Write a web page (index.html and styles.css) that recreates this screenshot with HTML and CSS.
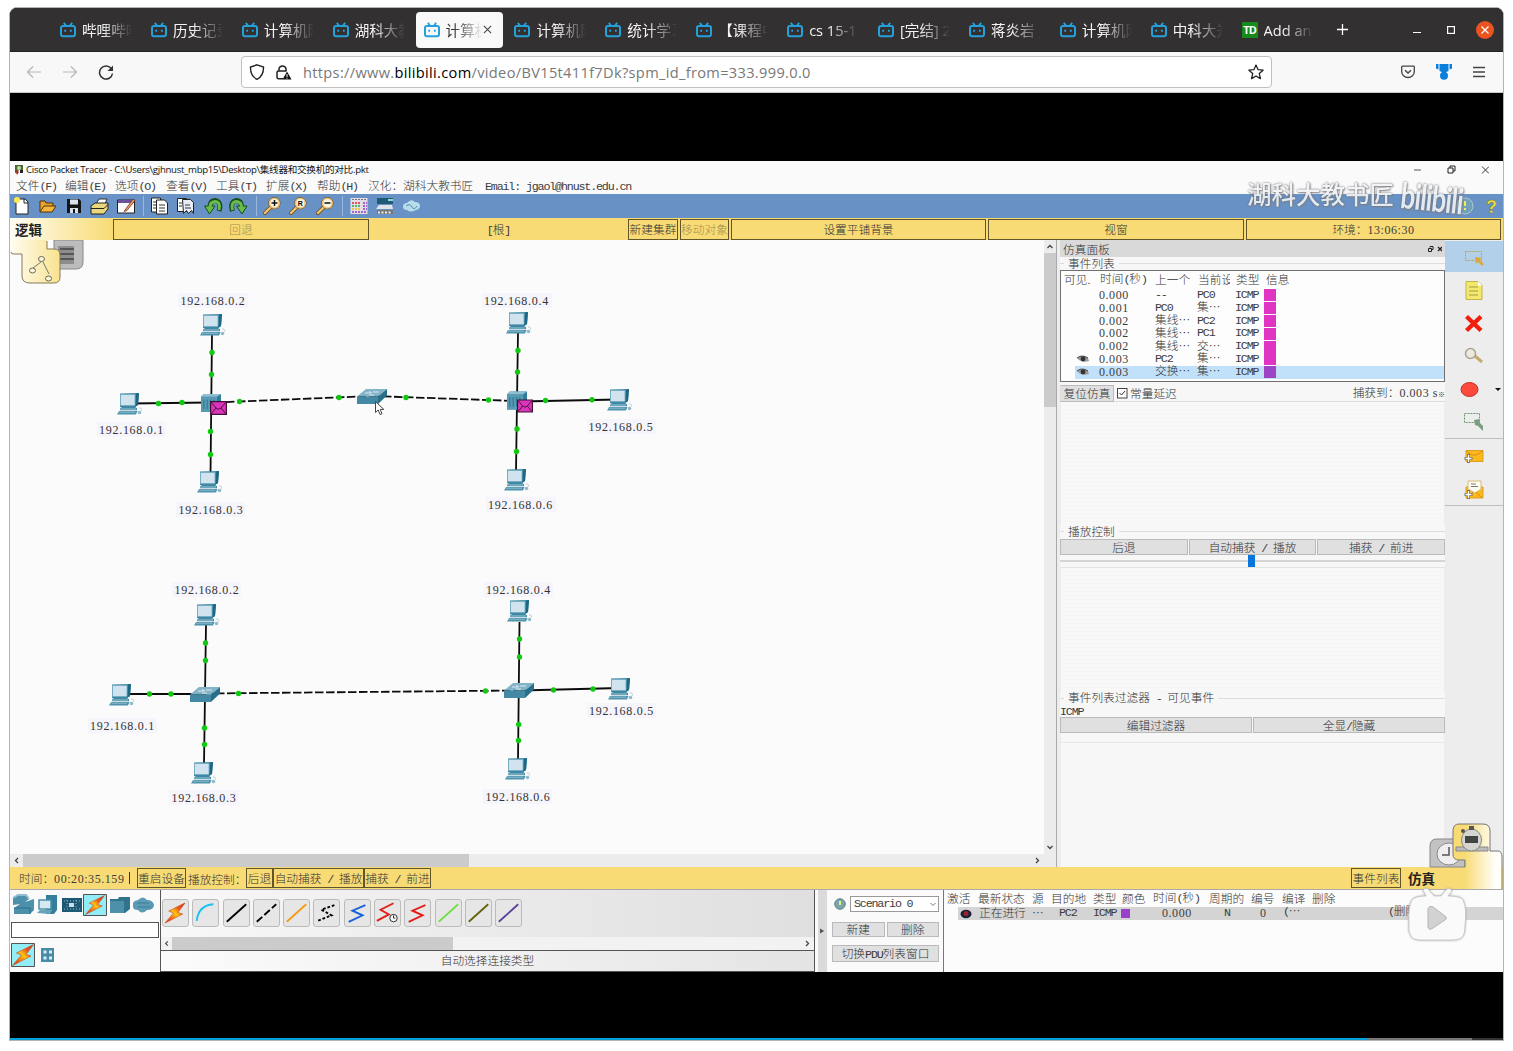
FILE: index.html
```html
<!DOCTYPE html>
<html lang="zh-CN">
<head>
<meta charset="utf-8">
<title>计算机网络</title>
<link rel="stylesheet" href="styles.css">
</head>
<body>
<svg class="defs" width="0" height="0">
  <defs>
    <linearGradient id="bolt" x1="1" y1="0" x2="0" y2="1"><stop offset="0" stop-color="#c22a16"/><stop offset=".3" stop-color="#f0581a"/><stop offset=".5" stop-color="#ffc50c"/><stop offset=".75" stop-color="#f46418"/><stop offset="1" stop-color="#c81c1c"/></linearGradient>
    <linearGradient id="tabL" x1="0" x2="1"><stop offset="0" stop-color="#fffdf3"/><stop offset="1" stop-color="#f9e28e"/></linearGradient>
    <linearGradient id="tabR" x1="0" x2="1"><stop offset=".24" stop-color="#f8db75"/><stop offset=".85" stop-color="#fffef8"/></linearGradient>
    <symbol id="bili" viewBox="0 0 16 16"><rect x="1" y="4" width="14" height="10.3" rx="2" fill="none" stroke="#26a0da" stroke-width="2"/><path d="M3.8.8 6 3.5M12.2.8 10 3.5" stroke="#26a0da" stroke-width="1.9"/><path d="M5.2 7.8v2M10.8 7.8v2" stroke="#26a0da" stroke-width="1.8"/></symbol>
    <symbol id="pc" viewBox="0 0 26 22"><path d="M3 .5 22 0l-1 12-3 2H3z" fill="#3d89a5"/><path d="M19 .5 22 0 21 12l-3 2z" fill="#1c6884"/><path d="M3.500 1.500h14.500v11H3.500z" fill="#d0e3ee" stroke="#74a9bf" stroke-width=".8"/><path d="M5 14h13l2 1.200v2H3v-2z" fill="#4089a5"/><path d="M3 16h16" stroke="#b5d3de" stroke-width=".8"/><path d="M2 18h18.500l-1.500 3.500H0z" fill="#4f93ae"/><path d="M2 19.200h16" stroke="#a8cddb" stroke-width=".7"/><path d="M22 15c3 0 3 1 2 3" fill="none" stroke="#b5ced7"/><ellipse cx="22.500" cy="19.500" rx="1.800" ry="1.700" fill="#8fbbcb"/></symbol>
    <symbol id="hub" viewBox="0 0 21 19"><path d="M0 3 3 0h18v14l-4 5H0z" fill="#2f7c98"/><path d="M0 3h17v16H0z" fill="#569ab5"/><path d="M0 3 3 0h18l-4 3z" fill="#8fbfd0"/><path d="M3 6v10M6.500 6v10M10 6v10M13.500 6v10" stroke="#2b728d" stroke-width="1"/></symbol>
    <symbol id="sw" viewBox="0 0 30 15"><path d="M0 7.500 9 0h21L21 7.500z" fill="#82b3c7"/><path d="M0 7.500h21V15H0z" fill="#4388a5"/><path d="M21 7.500 30 0v6.500L21 15z" fill="#286f8c"/><path d="M8 4h6m-2-1.500 3 1.500M22 3h-6M12 6h5" stroke="#e5f1f6" stroke-width=".9" fill="none"/></symbol>
    <symbol id="env" viewBox="0 0 17 14"><path d="M.6.600h15.800v12.800H.6z" fill="#dc34bb" stroke="#451237" stroke-width="1.200"/><path d="m1 1 5 6q2.500 2.500 5 0l5-6M1 13l5-6M16 13l-5-6" fill="none" stroke="#451237"/></symbol>
    <symbol id="spark" viewBox="0 0 22 22"><path d="M21.500.500 4.500 9l5 2L.5 21.500 19 12l-5-1.500z" fill="url(#bolt)" stroke="#c9481f" stroke-width=".6"/></symbol>
    <symbol id="eye" viewBox="0 0 12 8"><path d="M0 3Q5-1 11 3l1 3Q6 8 2 5z" fill="#999"/><circle cx="6" cy="4" r="2.400" fill="#333"/><path d="M0 3Q5-1 11 3" fill="none" stroke="#444"/></symbol>
    <symbol id="mag" viewBox="0 0 20 20"><path d="m9 11-7 7" stroke="#765119" stroke-width="4" stroke-linecap="round"/><path d="m9 11-7 7" stroke="#f3c875" stroke-width="2.300" stroke-linecap="round"/><circle cx="12" cy="7.500" r="6" fill="#fff7e5" stroke="#765119"/><circle cx="12" cy="7.500" r="5" fill="none" stroke="#eebf6d" stroke-width="1.500"/></symbol>
  </defs>
</svg>

<div class="window">
  <header class="tabbar">
    <div class="tabs">
      <div class="tab"><svg><use href="#bili"/></svg><span>哔哩哔哩</span></div>
      <div class="tab"><svg><use href="#bili"/></svg><span>历史记录</span></div>
      <div class="tab"><svg><use href="#bili"/></svg><span>计算机网</span></div>
      <div class="tab"><svg><use href="#bili"/></svg><span>湖科大教</span></div>
      <div class="tab active"><svg><use href="#bili"/></svg><span>计算机</span><b><svg viewBox="0 0 10 10"><path d="m1 1 8 8M9 1 1 9" stroke="#444" stroke-width="1.200"/></svg></b></div>
      <div class="tab"><svg><use href="#bili"/></svg><span>计算机网</span></div>
      <div class="tab"><svg><use href="#bili"/></svg><span>统计学习</span></div>
      <div class="tab"><svg><use href="#bili"/></svg><span>【课程中</span></div>
      <div class="tab"><svg><use href="#bili"/></svg><span>cs 15-12</span></div>
      <div class="tab"><svg><use href="#bili"/></svg><span>[完结] 20</span></div>
      <div class="tab"><svg><use href="#bili"/></svg><span>蒋炎岩 _</span></div>
      <div class="tab"><svg><use href="#bili"/></svg><span>计算机网</span></div>
      <div class="tab"><svg><use href="#bili"/></svg><span>中科大郑</span></div>
      <div class="tab"><i class="td">TD</i><span>Add an</span></div>
    </div>
    <svg class="plus" viewBox="0 0 14 14"><path d="M7 1v12M1 7h12" stroke="#fff" stroke-width="1.400"/></svg>
    <div class="winctl">
      <svg width="8" height="14"><path d="M0 9.500h8" stroke="#fff" stroke-width="1.200"/></svg>
      <svg width="8" height="8"><rect x=".6" y=".6" width="6.800" height="6.800" fill="none" stroke="#fff" stroke-width="1.200"/></svg>
      <svg width="18" height="18"><circle cx="9" cy="9" r="9" fill="#e95420"/><path d="m5.500 5.500 7 7m0-7-7 7" stroke="#fff" stroke-width="1.200"/></svg>
    </div>
  </header>
  <div class="navbar">
    <svg class="n1" viewBox="0 0 16 16"><path d="M15 8H1.500M7 2.500 1.500 8 7 13.500" fill="none" stroke="#b5b5b5" stroke-width="1.200"/></svg>
    <svg class="n2" viewBox="0 0 16 16"><path d="M1 8h13.500M9 2.500 14.500 8 9 13.500" fill="none" stroke="#b5b5b5" stroke-width="1.200"/></svg>
    <svg class="n3" viewBox="0 0 16 16"><path d="M13.500 5A6.500 6.500 0 1 0 14.500 9.500" fill="none" stroke="#333" stroke-width="1.500"/><path d="M15 1.500V7H9.500z" fill="#333"/></svg>
    <div class="url">
      <svg width="16" height="16" viewBox="0 0 16 16"><path d="M8 .8 14.500 3c.2 6-2 10-6.500 12.300C3.500 13 1.300 9 1.500 3z" fill="none" stroke="#222" stroke-width="1.400"/></svg>
      <svg width="18" height="16" viewBox="0 0 18 16"><path d="M4 7V4.500a3.700 3.700 0 0 1 7 0V7" fill="none" stroke="#222" stroke-width="1.500"/><path d="M8 14.700H3.500a1.500 1.500 0 0 1-1.500-1.500V8.500A1.500 1.500 0 0 1 3.500 7h8" fill="none" stroke="#222" stroke-width="1.500"/><path d="m12 7.500 4.500 8h-9z" fill="#111"/><path d="M12 10v3m0 .7v1" stroke="#fff" stroke-width="1"/></svg>
      <p>https://www.<em>bilibili.com</em>/video/BV15t411f7Dk?spm_id_from=333.999.0.0</p>
      <svg width="16" height="16" viewBox="0 0 16 16"><path d="m8 1 2.100 4.700 5 .5-3.800 3.400 1.100 5L8 12l-4.400 2.600 1.100-5L.9 6.200l5-.5z" fill="none" stroke="#222" stroke-width="1.300" stroke-linejoin="round"/></svg>
    </div>
    <div class="navright">
      <svg width="14" height="14" viewBox="0 0 14 14"><path d="M1.500 1.200h11q.8 0 .8.800v4.500a6.300 6 0 0 1-12.600 0V2q0-.8.800-.8z" fill="none" stroke="#444" stroke-width="1.300"/><path d="m4 5.200 3 2.900 3-2.900" fill="none" stroke="#444" stroke-width="1.400"/></svg>
      <svg width="16" height="16" viewBox="0 0 16 16"><path d="M0 0h2.500v5.500L0 4.500zM3.500 0h9v7l-4.500 2-4.500-2zM13.500 0H16v4.500l-2.500 1z" fill="#0a7fdc"/><circle cx="8" cy="11.800" r="4" fill="#0a7fdc"/></svg>
      <svg width="12" height="12" viewBox="0 0 12 12"><path d="M0 1.500h12M0 6h12M0 10.500h12" stroke="#444" stroke-width="1.300"/></svg>
    </div>
  </div>

  <main class="video">
    <div class="app">
      <div class="apptitle">
        <svg width="10" height="12" viewBox="0 0 10 12"><path d="M1 1h8v5H5l-2 3H1z" fill="#4a6b2f"/><circle cx="5" cy="4" r="2" fill="#c8d8a4"/><path d="m1 6 2 5 2-3" fill="#a92e21"/><path d="M6 6h3v3H6z" fill="#223"/></svg>
        <p>Cisco Packet Tracer - C:\Users\gjhnust_mbp15\Desktop\集线器和交换机的对比.pkt</p>
        <svg class="wc" width="75" height="10" viewBox="0 0 75 10"><path d="M0 5h7" stroke="#555"/><path d="M34 3h5v5h-5zM36 3V1h5v5h-2" fill="none" stroke="#222"/><path d="m68 1.500 7 7m0-7-7 7" stroke="#333"/></svg>
      </div>
      <nav class="menu"><span>文件<i>(F)</i></span><span>编辑<i>(E)</i></span><span>选项<i>(O)</i></span><span>查看<i>(V)</i></span><span>工具<i>(T)</i></span><span>扩展<i>(X)</i></span><span>帮助<i>(H)</i></span><span>汉化：湖科大教书匠</span><span><i>Email: jgaol@hnust.edu.cn</i></span></nav>
      <div class="tools">
        <svg width="1493" height="24" viewBox="10 194 1493 24">
          <path d="M16 199h9l3 3v12H16z" fill="#fff" stroke="#222"/><path d="M24 199v4h4" fill="none" stroke="#222"/><circle cx="17" cy="200" r="3" fill="#ffe94a"/>
          <path d="M40 212v-11h5l1 2h7v3" fill="#e8a42c" stroke="#50330b"/><path d="m40 212 4-6h12l-4 6z" fill="#f7b63a" stroke="#50330b"/>
          <path d="M67 199h12l2 2v12H67z" fill="#151515"/><path d="M70 199.500h8v5h-8zM70 208h8v5h-8z" fill="#d8e2ef"/><path d="M73 209h2v4h-2z" fill="#151515"/>
          <path d="m95 206 4-7h8l-3 7z" fill="#fff" stroke="#333"/><path d="m91 206 4-3h13v6l-4 5H91z" fill="#e9d67d" stroke="#222"/><path d="M91 208.500h13l4-4" fill="none" stroke="#222"/>
          <path d="M117.500 200h17v13h-17z" fill="#fff" stroke="#222"/><path d="M118 200h16v3h-16z" fill="#6c529a"/><path d="m125 210 8-11 2 1.500-8 10-3 1z" fill="#e99865" stroke="#632b13" stroke-width=".7"/>
          <path d="M143.500 196v20M256.500 196v20M342.500 196v20" stroke="#9bb9e0"/>
          <path d="M151.500 198h9v14h-9z" fill="#fff" stroke="#222"/><path d="M156.500 200h8l3 3v11h-11z" fill="#fff" stroke="#222"/><path d="M159 205h6m-6 3h6m-6 3h6M153 202h3m-3 3h3m-3 3h3" stroke="#333"/>
          <path d="M177.500 198.500h9v13h-9z" fill="#fff" stroke="#222"/><path d="M182.500 199.500h8l3 3v11l-2-3-3 3-2-3-3 3z" fill="#e8edf5" stroke="#222"/><path d="M179 203h3m-3 3h3m3-1h5m-5 3h6" stroke="#333"/>
          <path d="M219 211q3-9-4-10.500-5 .5-5 6.500" fill="none" stroke="#174d1b" stroke-width="5"/><path d="m204.500 206 5 8 5.500-8z" fill="#68bd48" stroke="#174d1b"/><path d="M219 210q2-8-4-8.500-5 .5-5 5.500" fill="none" stroke="#68bd48" stroke-width="3"/>
          <path d="M232.500 211q-3-9 4-10.500 5 .5 5 6.500" fill="none" stroke="#174d1b" stroke-width="5"/><path d="m247 206-5 8-5.500-8z" fill="#68bd48" stroke="#174d1b"/><path d="M232.500 210q-2-8 4-8.500 5 .5 5 5.500" fill="none" stroke="#68bd48" stroke-width="3"/>
          <use href="#mag" x="263" y="196" width="19" height="19"/><use href="#mag" x="289" y="196" width="19" height="19"/><use href="#mag" x="316" y="196" width="19" height="19"/>
          <path d="M271.500 203h6m-3-3v6M324.500 203h6" stroke="#111" stroke-width="1.500"/><text x="297.800" y="206" class="zr">R</text>
          <path d="M350.500 198h17v16h-17z" fill="#e5dde8"/><path d="M352 199.500h14" stroke="#777" stroke-dasharray="2 1"/><path d="M352 203h9" stroke="#e2555c" stroke-width="2" stroke-dasharray="2 1"/><path d="M352 206h9" stroke="#57b865" stroke-width="2" stroke-dasharray="2 1"/><path d="M352 209h9" stroke="#ecc446" stroke-width="2" stroke-dasharray="2 1"/><path d="M352 212h15M363 203h4m-4 3h4m-4 3h4" stroke="#9d65c7" stroke-width="2" stroke-dasharray="2 1"/>
          <path d="M377 198h16v6h-16z" fill="#205a74"/><path d="M388 199h5v2h-5z" fill="#8edada"/><path d="M379 205h13l1 4h-17z" fill="#e0e4e8"/><path d="M377 210h16v4h-16z" fill="#777"/><path d="M378 212.500h14" stroke="#eee" stroke-width="2" stroke-dasharray="2 1.500"/>
          <path d="M403 207q0-4 4-4 4-5 8-1 5 0 5 4 0 3-4 4-6 3-9 0-4 0-4-3z" fill="#b9dcea"/><path d="M406 206q4-3 6 1t5-1" fill="none" stroke="#4c91ab"/>
          <circle cx="1465" cy="206" r="8" fill="#71a1b9" stroke="#aac8d8"/><path d="M1465 201v5m0 2v2" stroke="#f6e860" stroke-width="2"/><text x="1486" y="213" class="help">?</text>
        </svg>
      </div>
      <div class="ybar top">
        <strong>逻辑</strong><span class="bx dim">回退</span><span class="root"><i>[</i>根<i>]</i></span><span class="bx">新建集群</span><span class="bx dim">移动对象</span><span class="bx">设置平铺背景</span><span class="bx">视窗</span><span class="bx">环境：<i class="n">13:06:30</i></span>
      </div>

      <div class="work">
        <div class="canvas">
          <svg class="topo" width="1034" height="614" viewBox="10 240 1034 614">
            <path d="M54 240h29v22q0 7-7 7H54z" fill="#bcbcbc" stroke="#888"/><path d="M58 246h16v18H58z" fill="#8d8d8d"/><path d="M60 249h14m-14 5h14m-14 5h14" stroke="#444" stroke-width="1.500"/>
            <path d="M10 240h37v9h7q6 0 6 6v22q0 6-6 6H30q-8 0-8-7v-22H10z" fill="url(#tabL)"/><path d="M11 252q0 2 3 2h8v22q0 7 8 7h24q6 0 6-6v-22q0-6-6-6h-7v-8" fill="none" stroke="#857b56"/>
            <path d="m41 262-8 6m10-6 6 12" stroke="#777"/><g fill="#fdf8dd" stroke="#665"><ellipse cx="41.500" cy="259" rx="3" ry="2.500"/><ellipse cx="32.500" cy="270.500" rx="3" ry="2.500"/><ellipse cx="48.500" cy="278.500" rx="3" ry="2.500"/></g>
            <g class="tag"><rect x="178" y="293" width="70" height="15"/><rect x="97" y="422" width="69" height="15"/><rect x="176" y="502" width="69" height="15"/><rect x="482" y="293" width="70" height="15"/><rect x="587" y="419" width="69" height="15"/><rect x="486" y="497" width="70" height="15"/><rect x="172" y="582" width="69" height="15"/><rect x="88" y="718" width="69" height="15"/><rect x="169" y="790" width="70" height="15"/><rect x="484" y="582" width="69" height="15"/><rect x="587" y="703" width="69" height="15"/><rect x="483" y="789" width="69" height="15"/></g>
            <path d="M212 334 210.500 475M130 403.500 210 402.500M518 332 516 471M520 401.500 618 399.500M206 625 204 764M122 694h82M519.500 622 518 760M520 690.500 620 688" stroke="#0c0c0c" stroke-width="1.800" fill="none"/>
            <path d="M215 402.500 372 396M372 396 516 401M205 693.500 518 690.500" stroke="#0c0c0c" stroke-width="1.800" stroke-dasharray="8.500 2.500" fill="none"/>
            <use href="#pc" x="200" y="314" width="26" height="22"/><use href="#pc" x="117" y="393" width="26" height="22"/><use href="#pc" x="197" y="471" width="26" height="22"/><use href="#pc" x="506" y="312" width="26" height="22"/><use href="#pc" x="607" y="389" width="26" height="22"/><use href="#pc" x="504" y="469" width="26" height="22"/>
            <use href="#pc" x="194" y="604" width="26" height="22"/><use href="#pc" x="109" y="684" width="26" height="22"/><use href="#pc" x="191" y="762" width="26" height="22"/><use href="#pc" x="507" y="600" width="26" height="22"/><use href="#pc" x="608" y="678" width="26" height="22"/><use href="#pc" x="505" y="758" width="26" height="22"/>
            <use href="#hub" x="201" y="394" width="20" height="18"/><use href="#hub" x="507" y="391" width="20" height="19"/>
            <use href="#env" x="210" y="401" width="17" height="14"/><use href="#env" x="517" y="399" width="16" height="14"/>
            <use href="#sw" x="357" y="389" width="30" height="15"/><use href="#sw" x="190" y="687" width="30" height="15"/><use href="#sw" x="504" y="683" width="30" height="15"/>
            <g fill="#12c912"><circle cx="212" cy="352.500" r="2.700"/><circle cx="211.500" cy="374.500" r="2.700"/><circle cx="158.500" cy="403.500" r="2.700"/><circle cx="182" cy="402.500" r="2.700"/><circle cx="239.500" cy="401.500" r="2.700"/><circle cx="339" cy="397.500" r="2.700"/><circle cx="406" cy="397.500" r="2.700"/><circle cx="210.500" cy="431.500" r="2.700"/><circle cx="210.500" cy="454.500" r="2.700"/><circle cx="518" cy="350.500" r="2.700"/><circle cx="517.500" cy="372" r="2.700"/><circle cx="488.500" cy="400" r="2.700"/><circle cx="545.500" cy="400.500" r="2.700"/><circle cx="592" cy="399.700" r="2.700"/><circle cx="517" cy="429" r="2.700"/><circle cx="516.500" cy="451.500" r="2.700"/>
            <circle cx="205.500" cy="643" r="2.700"/><circle cx="205.500" cy="660.500" r="2.700"/><circle cx="149.500" cy="694" r="2.700"/><circle cx="171" cy="694" r="2.700"/><circle cx="238.500" cy="693.500" r="2.700"/><circle cx="204.500" cy="728" r="2.700"/><circle cx="204.500" cy="744.500" r="2.700"/><circle cx="519.500" cy="639" r="2.700"/><circle cx="519.500" cy="657" r="2.700"/><circle cx="485.500" cy="691" r="2.700"/><circle cx="553.500" cy="690" r="2.700"/><circle cx="593" cy="689" r="2.700"/><circle cx="518.700" cy="724.500" r="2.700"/><circle cx="518.500" cy="740.500" r="2.700"/></g>
            <g class="ip"><text x="180.500" y="305">192.168.0.2</text><text x="99" y="433.500">192.168.0.1</text><text x="178.500" y="514">192.168.0.3</text><text x="484" y="304.500">192.168.0.4</text><text x="588.500" y="430.500">192.168.0.5</text><text x="488" y="508.700">192.168.0.6</text><text x="174.500" y="593.500">192.168.0.2</text><text x="90" y="729.700">192.168.0.1</text><text x="171.500" y="801.500">192.168.0.3</text><text x="486" y="594">192.168.0.4</text><text x="589" y="714.700">192.168.0.5</text><text x="485.500" y="800.500">192.168.0.6</text></g>
            <path d="M375.500 401.500v11l2.700-2.500 1.800 4.500 2-.8-1.800-4.300h3.600z" fill="#fff" stroke="#444"/>
          </svg>
          <div class="vs"><svg viewBox="0 0 12 13"><path d="m3.500 8 2.500-2.500L8.500 8" fill="none" stroke="#444" stroke-width="1.300"/></svg><div></div><svg viewBox="0 0 12 13"><path d="m3.500 5 2.500 2.500L8.500 5" fill="none" stroke="#444" stroke-width="1.300"/></svg></div>
          <div class="hs"><svg viewBox="0 0 13 13"><path d="M8 4 5.500 6.500 8 9" fill="none" stroke="#444" stroke-width="1.300"/></svg><div></div><svg viewBox="0 0 13 13"><path d="m5 4 2.500 2.500L5 9" fill="none" stroke="#444" stroke-width="1.300"/></svg></div>
        </div>

        <section class="panel">
          <h2>仿真面板<svg width="14" height="6" viewBox="0 0 14 6"><path d="M.5 2.500h3v3h-3zM2 1.500V.5h3v3H4" fill="none" stroke="#222"/><path d="m10 1 4 4m0-4-4 4" stroke="#222" stroke-width="1.300"/></svg></h2>
          <div class="lg"><span>事件列表</span></div>
          <div class="events">
            <div class="ev hd"><span>可见.</span><span>时间<i>(</i>秒<i>)</i></span><span>上一个</span><span>当前设</span><span>类型</span><span>信息</span></div>
            <div class="ev"><span></span><i class="n">0.000</i><i>--</i><i>PC0</i><i>ICMP</i><b></b></div>
            <div class="ev"><span></span><i class="n">0.001</i><i>PC0</i><span>集⋯</span><i>ICMP</i><b></b></div>
            <div class="ev"><span></span><i class="n">0.002</i><span>集线⋯</span><i>PC2</i><i>ICMP</i><b></b></div>
            <div class="ev"><span></span><i class="n">0.002</i><span>集线⋯</span><i>PC1</i><i>ICMP</i><b></b></div>
            <div class="ev"><span></span><i class="n">0.002</i><span>集线⋯</span><span>交⋯</span><i>ICMP</i><b></b></div>
            <div class="ev"><svg><use href="#eye"/></svg><i class="n">0.003</i><i>PC2</i><span>集⋯</span><i>ICMP</i><b></b></div>
            <div class="ev sel"><svg><use href="#eye"/></svg><i class="n">0.003</i><span>交换⋯</span><span>集⋯</span><i>ICMP</i><b></b></div>
          </div>
          <div class="reset"><span class="btn">复位仿真</span><svg width="11" height="11"><rect x=".5" y=".5" width="9.500" height="9.500" fill="#fff" stroke="#444"/><path d="m2.500 5 2 2L8 3" fill="none" stroke="#333"/></svg><span>常量延迟</span><span class="cap">捕获到：<i class="n">0.003 s</i><small>※</small></span></div>
          <div class="void a"></div>
          <div class="lg"><span>播放控制</span></div>
          <div class="btns"><span class="btn">后退</span><span class="btn">自动捕获<i> / </i>播放</span><span class="btn">捕获<i> / </i>前进</span></div>
          <div class="slider"><b></b></div>
          <div class="void b"></div>
          <div class="lg"><span>事件列表过滤器<i> - </i>可见事件</span></div>
          <div class="icmp"><i>ICMP</i></div>
          <div class="btns"><span class="btn">编辑过滤器</span><span class="btn">全显<i>/</i>隐藏</span></div>
          <div class="void c"></div>
        </section>

        <aside class="side">
          <svg width="58" height="266" viewBox="1445 240 58 266">
            <path d="M1445 241h58v31h-58z" fill="#b2d0ea"/>
            <path d="M1465.500 251.500h16v9h-16z" fill="none" stroke="#b9a75c" stroke-dasharray="2 1"/><path d="m1475 257 7 1-2 2 4 4-2 2-4-4-2 2z" fill="#d9a941"/>
            <path d="M1466 281.500h12l4 4v14h-16z" fill="#f4e96f" stroke="#c1b449"/><path d="M1469 287h9m-9 4h9m-9 4h9" stroke="#a39842"/><path d="M1478 281.500v4h4z" fill="#fff"/>
            <path d="m1466.500 316.500 14.500 14m0-14-14.500 14" stroke="#f31d0b" stroke-width="4.300"/>
            <path d="m1475 356 7 6" stroke="#c5ab6e" stroke-width="3"/><circle cx="1470.500" cy="353.500" r="5" fill="#eceae0" stroke="#aaa38a" stroke-width="1.500"/>
            <ellipse cx="1469.500" cy="389.500" rx="8.500" ry="7" fill="#fc4b3c" stroke="#c73026"/><path d="M1495 388h6l-3 3z" fill="#111"/>
            <path d="M1464.500 413.500h15v9h-15z" fill="none" stroke="#6d966f" stroke-dasharray="2 1"/><path d="m1474 420 5-1 1 4 3 3v5l-5-5-3-1z" fill="#7d9d82"/>
            <path d="M1445 438.500h58" stroke="#bdbdbd"/><path d="M1466 450.500h17v11h-17z" fill="#fbb91a" stroke="#dc9f25"/><path d="m1466 451 6 4h4l7-4" fill="none" stroke="#dc8a20"/><path d="M1468.500 454v9m-4-4.500h8" stroke="#777" stroke-width="3"/><path d="M1468.500 455v7m-3-3.500h6" stroke="#fff" stroke-width="1.300"/>
            <path d="M1466 487h17v11h-17z" fill="#fbb91a" stroke="#dc9f25"/><path d="M1468 481h13v8l-6 4-7-4z" fill="#fffdf0" stroke="#d5ba75"/><path d="M1471 484h5m-5 2.500h7" stroke="#777"/><path d="m1467 498 6-6m9 6-6-6" stroke="#dc8a20"/><path d="M1468.500 490v9m-4-4.500h8" stroke="#777" stroke-width="3"/><path d="M1468.500 491v7m-3-3.500h6" stroke="#fff" stroke-width="1.300"/>
            <path d="M1445 505.500h58" stroke="#bdbdbd"/>
          </svg>
        </aside>
      </div>

      <div class="ybar low">
        <span class="t">时间：<i class="n">00:20:35.159</i></span><span class="bar"></span><span class="bx">重启设备</span><span class="pl">播放控制：</span><span class="bx">后退</span><span class="bx">自动捕获<i> / </i>播放</span><span class="bx">捕获<i> / </i>前进</span><span class="bx r">事件列表</span><strong>仿真</strong>
      </div>

      <div class="bottom">
        <div class="cats">
          <svg width="150" height="29" viewBox="10 889 150 29">
            <path d="m13 898 5-3h8l3 4-4 3 9-3v11l-4 4H14v-6l6-4-7 1z" fill="#4c90a9"/><path d="m13 898 5-3h8l3 4" fill="none" stroke="#8dbdcd" stroke-width="2"/><path d="M14 908h16v6" fill="none" stroke="#25708c"/>
            <path d="M46 895h11v15l-3 4h-8z" fill="#347f9b"/><path d="M39 900h12v9H39z" fill="#d6e8f0" stroke="#4c90a9" stroke-width="1.500"/><path d="m37 913 3-3h12l-2 4z" fill="#67a4ba"/>
            <path d="M62 898h20v14H62z" fill="#1e5974"/><path d="M64 901h16m-16 8h16M67 900v9m9-9v9" stroke="#8abdcd" stroke-dasharray="1 2"/><path d="M69 903h5v4h-5z" fill="#cae0e8"/>
            <path d="M83.500 894.500h23v21h-23z" fill="#91edf6" stroke="#555"/><use href="#spark" x="84" y="895" width="22" height="20"/>
            <path d="M110 899h8l1-2h11v12l-5 4h-15z" fill="#31738d"/><path d="M110 901h14v12h-14z" fill="#4c90a9"/>
            <path d="M133 905q-1-4 5-5 5-5 9 0 6 0 7 5 0 5-7 5-5 5-9 0-6 0-5-5z" fill="#5b9bb3"/><path d="M137 903h12m-11 4h13" stroke="#397f9a"/>
          </svg>
          <div class="field"></div>
          <svg width="150" height="30" viewBox="10 941 150 30"><path d="M11.500 943.500h23v23h-23z" fill="#91edf6" stroke="#555"/><use href="#spark" x="12" y="944" width="22" height="22"/><path d="M41 948h13v14H41z" fill="#478ba5"/><path d="M43.500 950.500h3v3h-3zM49 950.500h3v3h-3zM43.500 956.500h3v3h-3zM49 956.500h3v3h-3z" fill="#d9edf5"/></svg>
        </div>
        <div class="links">
          <div class="cables">
            <svg viewBox="0 0 27 27"><use href="#spark" x="1.500" y="2" width="23" height="23"/></svg>
            <svg viewBox="0 0 27 27"><path d="M4 22Q6 5 22 4" stroke="#18c2ef"/></svg>
            <svg viewBox="0 0 27 27"><path d="M3 23 24 4" stroke="#000"/></svg>
            <svg viewBox="0 0 27 27"><path d="M3 23 24 4" stroke="#000" stroke-dasharray="8 3"/></svg>
            <svg viewBox="0 0 27 27"><path d="M3 23 24 4" stroke="#f49b15"/></svg>
            <svg viewBox="0 0 27 27"><path d="M22 5 8 10l11 6L4 22" stroke="#000" stroke-dasharray="3 2"/></svg>
            <svg viewBox="0 0 27 27"><path d="M22 5 8 11l11 5L4 23" stroke="#1761dc"/></svg>
            <svg viewBox="0 0 27 27"><path d="M20 3 6 10l9 5L2 22" stroke="#e11d19"/><circle cx="20" cy="19" r="4" class="clk"/><path d="M20 16v3h2" class="thin"/></svg>
            <svg viewBox="0 0 27 27"><path d="M22 5 8 11l11 5L4 23" stroke="#e11d19"/></svg>
            <svg viewBox="0 0 27 27"><path d="M3 23 24 4" stroke="#72df49"/></svg>
            <svg viewBox="0 0 27 27"><path d="M3 23 24 4" stroke="#65620f"/></svg>
            <svg viewBox="0 0 27 27"><path d="M3 23 24 4" stroke="#5b4399"/></svg>
          </div>
          <div class="hs"><svg viewBox="0 0 13 13"><path d="M8 4 5.500 6.500 8 9" fill="none" stroke="#444" stroke-width="1.300"/></svg><div></div><svg viewBox="0 0 13 13"><path d="m5 4 2.500 2.500L5 9" fill="none" stroke="#444" stroke-width="1.300"/></svg></div>
          <div class="cname">自动选择连接类型</div>
        </div>
        <div class="split"><svg viewBox="0 0 6 6"><path d="M0 0v6l5-3z" fill="#555"/></svg></div>
        <div class="scen">
          <div class="pick"><svg width="12" height="12"><circle cx="6" cy="6" r="5.300" fill="#79a5a8" stroke="#60828a"/><path d="M6 3v4" stroke="#e3ef8a" stroke-width="2"/></svg><span><i>Scenario 0</i><svg width="8" height="5"><path d="m1.500 1 2.500 2.500L6.500 1" fill="none" stroke="#777"/></svg></span></div>
          <div class="two"><span class="btn">新建</span><span class="btn">删除</span></div>
          <span class="btn">切换<i>PDU</i>列表窗口</span>
        </div>
        <div class="pdus">
          <div class="pd h"><span>激活</span><span>最新状态</span><span>源</span><span>目的地</span><span>类型</span><span>颜色</span><span>时间<i>(</i>秒<i>)</i></span><span>周期的</span><span>编号</span><span>编译</span><span>删除</span></div>
          <div class="pd v"><svg width="12" height="10"><ellipse cx="6" cy="5" rx="5.500" ry="4.200" fill="#16233a"/><circle cx="6" cy="4.500" r="2.500" fill="#a1212c"/></svg><span>正在进行</span><span>⋯</span><i>PC2</i><i>ICMP</i><b></b><i class="n">0.000</i><i>N</i><i class="n">0</i><span><i>(</i>⋯</span><span><i>(</i>删除<i>)</i></span></div>
        </div>
      </div>

      <svg class="modetab" width="74" height="66" viewBox="1429 823 74 66">
        <path d="M1430 867v-21q0-7 7-7h28v28z" fill="#c2c2c2" stroke="#888"/><ellipse cx="1449" cy="854" rx="12" ry="11" fill="#eee" stroke="#888"/><path d="M1449 847v8h-7" fill="none" stroke="#555" stroke-width="1.500"/>
        <path d="M1453 854v-23q0-7 6-7h24q7 0 7 7v20h9q3 1 3 6v32h-37v-29h-6q-6 0-6-6z" fill="url(#tabR)"/><path d="M1465 867v-7h-6q-6 0-6-6v-23q0-7 6-7h24q7 0 7 7v20h8q4 0 4 6v32" fill="none" stroke="#777"/>
        <path d="M1456 847h32v4h-32z" fill="#bbb" stroke="#888"/><ellipse cx="1471.500" cy="840" rx="10" ry="11" fill="#d4d4d0" stroke="#888"/><path d="M1465 836h13v7h-13z" fill="#444"/><path d="M1469 826h5v4h-5z" fill="#555"/><circle cx="1463" cy="831" r="2" fill="#555"/>
      </svg>
      <div class="mark"><span>湖科大教书匠</span><b>bilibili</b></div>
      <svg class="play" width="62" height="60" viewBox="0 0 62 60"><g fill="#fff" fill-opacity=".94"><path d="M17 5q3-3 5-1l6 7h7l6-7q3-2 5 2l-4 5q13 0 15 4 4 8 2 25 0 11-4 13-3 2-8 2H15q-8 0-10-4-3-4-2-12-1-18 3-24 3-4 14-4z" stroke="#bbb" stroke-width=".7"/></g><path d="M22 24v18q1 4 5 1l12-8q3-2 0-4l-12-9q-4-2-5 2z" fill="#d2d2d2" stroke="#b5b5b5"/></svg>
    </div>
    <div class="progress"><b></b><i></i></div>
  </main>
</div>
</body>
</html>
```

FILE: styles.css
```css
* { box-sizing: border-box; }
body { margin: 0; background: #fff; overflow: hidden; }
.defs { position: absolute; }
svg { display: block; flex: none; }
i, em { font-style: normal; }
.window { width: 1495px; height: 1034px; margin: 7px 0 0 9px; border: 1px solid #b4b4b4; border-radius: 8px 8px 0 0; overflow: hidden; background: #000; font-family: "Open Sans", "Noto Sans CJK SC", sans-serif; }

/* browser chrome */
.tabbar { height: 44px; background: #333031; border-bottom: 1px solid #222; display: flex; align-items: center; padding-left: 42px; }
.tabs { display: flex; gap: 3.900px; }
.tab { width: 87px; height: 36px; border-radius: 4px; padding-left: 8px; display: flex; align-items: center; gap: 6px; color: #f4f4f4; font: 14.600px/36px "Open Sans", "Noto Sans CJK SC", sans-serif; }
.tab > svg, .td { width: 16px; height: 16px; flex: none; }
.tab > span { width: 50px; overflow: hidden; white-space: pre; -webkit-mask-image: linear-gradient(90deg, #000 40%, transparent); mask-image: linear-gradient(90deg, #000 40%, transparent); }
.tab.active { background: #f9f9fa; color: #333; }
.tab.active > span { width: 37px; -webkit-mask-image: linear-gradient(90deg, #000 20%, transparent); mask-image: linear-gradient(90deg, #000 20%, transparent); }
.tab.active b { width: 10px; margin-left: -6px; }
.tab.active b svg { width: 9px; height: 9px; }
.td { background: #178a1d; color: #fff; font: bold 11px/16px "Open Sans", sans-serif; text-align: center; letter-spacing: -1px; }
.plus { width: 13px; height: 13px; margin-left: 15px; }
.winctl { margin-left: auto; display: flex; align-items: center; gap: 26px; padding-right: 9px; }
.winctl svg:last-child { margin-left: -5px; }
.navbar { height: 41px; background: #f8f8f9; border-bottom: 1px solid #c8c8c8; display: flex; align-items: center; padding-left: 16px; }
.navbar > svg { width: 16px; height: 16px; margin-right: 20px; }
.navbar .n3 { margin-right: 0; }
.url { width: 1031px; height: 32px; margin-left: 127px; border: 1px solid #bfbfbf; border-radius: 4px; background: #fff; display: flex; align-items: center; padding: 0 7px; }
.url p { margin: 0 0 0 10px; font: 14.600px/30px "Open Sans", sans-serif; color: #787878; letter-spacing: .330px; width: 945px; white-space: nowrap; }
.url svg + svg { margin-left: 10px; }
.url em { color: #000; }
.url p + svg { margin-left: 0; }
.navright { margin-left: auto; display: flex; align-items: center; gap: 21px; padding-right: 18px; }
.video { height: 947px; padding-top: 68px; background: #000; display: flex; flex-direction: column; }

/* application */
.app { height: 811px; background: #fafafa; position: relative; color: #333; font: 11.700px/14px "Noto Sans CJK SC", sans-serif; font-weight: 300; }
.app i { font-family: "Liberation Mono", monospace; letter-spacing: -1.170px; white-space: pre; color: #3c3c3c; }
.app i.n { font-family: "Liberation Serif", serif; font-size: 12px; letter-spacing: .560px; }
.apptitle { height: 17px; display: flex; align-items: center; padding-left: 4px; }
.apptitle p { margin: 0 0 0 2px; font: 9.600px/17px "Open Sans", "Noto Sans CJK SC", sans-serif; letter-spacing: -.280px; color: #111; white-space: nowrap; }
.wc { margin: 0 14px 0 auto; }
.menu { height: 16px; line-height: 14px; padding-left: 6px; display: grid; grid-template-columns: 49px 50px 51px 50px 50px 51px 51px 117px 150px; white-space: nowrap; }
.tools { height: 24px; background: #6891c5; }
.zr { font: bold 7px "Liberation Sans", sans-serif; }
.help { font: bold 18px "Liberation Sans", sans-serif; fill: #f4ec4a; stroke: #7b7325; stroke-width: .5px; }
.ybar { height: 22px; background: #f8db75; white-space: nowrap; }
.ybar .bx { border: 1px solid #63552a; }
.ybar .dim { color: #a38c4c; }
.top { display: grid; grid-template-columns: 103px 256px 259px 50px 51px 257px 258px 257px; padding: 1px 0; line-height: 18px; text-align: center; }
.top .root { line-height: 19px; }
.top .bx { height: 21px; }
.top .bx + .bx { margin-left: 2px; }
.ybar strong { font-size: 13.500px; font-weight: 700; color: #222; }
.top strong { text-align: left; padding-left: 5px; margin: -1px 0; line-height: 22px; background: linear-gradient(90deg, #fffef5, #f8db75); }
.work { height: 627px; display: grid; grid-template-columns: 1050px 385px 58px; background: #ededed; }
.canvas { width: 1047px; display: grid; grid-template: 614px 13px / 1034px 12px; background: #fbfbfb; border-right: 1px solid #a9a9a9; }
.tag { fill: #f5f5fb; }
.ip { font: 12px "Liberation Serif", serif; letter-spacing: .720px; fill: #333; }
.vs { background: #ececec; display: flex; flex-direction: column; justify-content: space-between; }
.vs svg { width: 12px; height: 13px; }
.vs div { height: 154px; background: #cbcbcb; margin-bottom: 434px; }
.hs { background: #ececec; display: flex; height: 13px; }
.canvas .hs { grid-column: 1 / 3; padding-right: 12px; }
.hs svg { width: 13px; height: 13px; }
.hs div { background: #cbcbcb; width: 446px; margin-right: auto; }
.panel { background: #f7f7f7; overflow: hidden; }
.panel h2 { margin: 0; height: 17px; font: inherit; line-height: 16px; background: #d9d9d9; padding: 0 3px; display: flex; justify-content: space-between; align-items: center; }
.lg { height: 13px; display: flex; align-items: center; line-height: 11px; }
.lg span { margin-top: -2px; }
.lg::before { content: ""; width: 4px; height: 1px; background: #ddd; margin-right: 4px; }
.lg::after { content: ""; flex: 1; height: 1px; background: #ddd; margin-left: 4px; }
.events { height: 112px; border: 1px solid #707070; background: #fdfdfd; }
.ev { height: 12.800px; line-height: 12.800px; display: grid; grid-template-columns: 38px 56px 42px 38px 29px 12px; white-space: nowrap; align-items: center; }
.ev > span { margin-top: -3px; }
.ev.hd { height: 18px; line-height: 18px; grid-template-columns: 36px 55px 43px 38px 30px 40px; padding-left: 3px; }
.ev.hd span:nth-child(4) { width: 32px; overflow: hidden; }
.ev svg { width: 12px; height: 8px; margin-left: 16px; }
.ev b { height: 12px; background: #df35c2; }
.ev.sel { background: linear-gradient(90deg, transparent 14px, #c1e1fb 14px); }
.ev.sel b { background: #9d43c6; }
.btn { background: #e0e0e0; border: 1px solid #bababa; text-align: center; white-space: nowrap; height: 17px; line-height: 14px; }
.reset { display: flex; align-items: center; height: 20px; padding-top: 3px; border-bottom: 1px solid #ddd; }
.reset .btn { width: 54px; border-left-color: #ddd; margin-right: 3px; }
.reset svg { margin-right: 2px; }
.cap { margin-left: auto; }
.cap small { font-size: 7px; }
.void { border: solid #ececec; border-width: 0 1px; background: repeating-linear-gradient(#f8f8f8 0 3px, #f5f5f5 3px 4px); }
.a { height: 123px; }
.btns { display: flex; gap: 1px; height: 17px; padding-top: 1px; }
.btns .btn { flex: 1; height: 16px; line-height: 13px; }
.slider { height: 13px; display: flex; align-items: center; background: linear-gradient(transparent 5px, #d5d5d5 5px 7px, transparent 7px); border-bottom: 1px solid #e5e5e5; }
.slider b { width: 7px; height: 12px; background: #0875dd; margin-left: 188px; }
.b { height: 124px; }
.icmp { height: 11px; line-height: 10px; }
.c { height: 141px; background: linear-gradient(transparent 9px, #e8e8e8 9px 10px, transparent 10px); }
.low { display: flex; align-items: center; padding: 1px 0; line-height: 19px; }
.low .bx { height: 20px; line-height: 17px; text-align: center; }
.low .t { padding-left: 9px; width: 119px; }
.low .bar { width: 1px; height: 12px; background: #333; margin-right: 7px; }
.low .bx:nth-child(3) { width: 49px; }
.low .pl { width: 60px; padding-left: 2px; }
.low .bx:nth-child(5) { width: 27px; }
.low .bx:nth-child(6) { width: 91px; }
.low .bx:nth-child(7) { width: 67px; }
.low .r { margin-left: auto; width: 50px; margin-right: 7px; }
.low strong { width: 95px; }

/* device palette and scenario list */
.bottom { height: 83px; display: grid; grid-template-columns: 150px 655px 3px 9px 116px 560px; border-top: 1px solid #aaa; }
.bottom > * { height: 82px; }
.cats { display: flex; flex-direction: column; gap: 3px; }
.cats svg { margin-top: -1px; }
.field { height: 16px; width: 148px; margin: 1px 0 1px 1px; border: 1px solid #555; background: #fff; flex: none; }
.links { border: 1px solid #555; border-top: 0; background: linear-gradient(90deg, #f9f9f9, #eee 35%, #dfdfdf); display: flex; flex-direction: column; }
.cables { height: 47px; display: flex; gap: 3.300px; padding: 9px 1px; }
.cables svg { width: 27px; height: 28px; border: 1px solid #bbb; border-radius: 3px; background: #e6e6e6; }
.cables path { fill: none; stroke-width: 2; }
.clk { fill: #fff; stroke: #222; }
.cables .thin { stroke: #222; stroke-width: 1; }
.links .hs { background: #f2f2f2; }
.links .hs div { width: 281px; }
.links .hs svg:first-child { width: 11px; }
.cname { flex: 1; border-top: 1px solid #555; text-align: center; line-height: 18px; background: linear-gradient(90deg, #fbfbfb, #f1f1f1 50%, #e4e4e4); }
.split { grid-column: 4; background: #dadada; display: flex; align-items: center; padding-left: 2px; }
.split svg { width: 5px; height: 6px; }
.scen { padding: 6px 4px 0 5px; display: flex; flex-direction: column; gap: 8px; }
.pick { display: flex; align-items: center; gap: 4px; margin: 0 0 2px 2px; height: 16px; }
.pick span { flex: 1; height: 16px; border: 1px solid #999; background: #fff; display: flex; align-items: center; justify-content: space-between; padding: 0 1px 0 3px; }
.two { display: flex; gap: 2px; height: 15px; }
.two .btn { flex: 1; height: 15px; line-height: 12px; }
.scen > .btn { height: 17px; }
.pdus { border-left: 1px solid #777; background: #fcfcfc; }
.pd { display: grid; white-space: nowrap; padding-left: 3px; align-items: center; height: 17px; }
.pd.h { line-height: 16px; grid-template-columns: 31px 54px 19px 42px 29px 31px 56px 42px 31px 30px 30px; }
.pd.h > span { margin-top: -2px; }
.pd.v { height: 13px; line-height: 13px; padding-left: 16px; grid-template-columns: 19px 53px 27px 34px 28px 41px 62px 36px 23px 105px 50px; background: linear-gradient(90deg, transparent 14px, #d4d4d4 14px); }
.pd.v > span { margin-top: -5px; }
.pd.v > i { margin-top: -1px; }
.pd b { width: 9px; height: 9px; background: #9941ca; }

/* overlays of the player */
.modetab { position: absolute; left: 1419px; top: 662px; }
.mark { position: absolute; left: 1237px; top: 13px; height: 40px; display: flex; align-items: center; gap: 7px; color: #f1f3f6; text-shadow: 0 0 2px #555, 1px 1px 2px #888; font-size: 24.500px; line-height: 40px; font-weight: 500; white-space: nowrap; opacity: .9; }
.mark b { font: bold 31px/40px Lato, sans-serif; letter-spacing: -1px; transform: rotate(6deg) scaleX(.84) scaleY(1.150); transform-origin: left; }
.play { position: absolute; left: 1396px; top: 724px; filter: drop-shadow(0 0 1px #aaa); }
.progress { height: 2px; margin-top: 66px; background: #333; display: flex; }
.progress b { width: 1358px; background: #00a1d6; }
.progress i { width: 104px; background: #777; }
```
